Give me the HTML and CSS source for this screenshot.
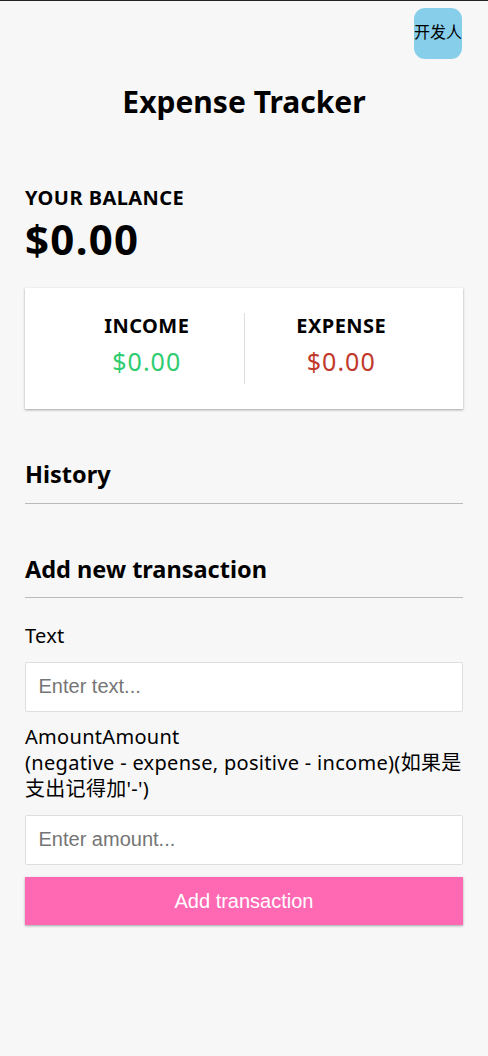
FILE: index.html
```html
<!DOCTYPE html>
<html lang="en">
<head>
<meta charset="UTF-8">
<title>Expense Tracker</title>
<link rel="stylesheet" href="styles.css">
</head>
<body>
<button class="dev">开发人</button>
<main class="container">
  <h2 class="title">Expense Tracker</h2>
  <h4 class="caption">Your Balance</h4>
  <h1 class="balance">$0.00</h1>
  <div class="inc-exp">
    <div class="col col-first">
      <h4 class="caption">Income</h4>
      <p class="money plus">$0.00</p>
    </div>
    <div class="col">
      <h4 class="caption">Expense</h4>
      <p class="money minus">$0.00</p>
    </div>
  </div>
  <h3 class="section">History</h3>
  <ul class="list"></ul>
  <h3 class="section section-add">Add new transaction</h3>
  <form class="form">
    <div class="form-control">
      <label class="label" for="text">Text</label>
      <input class="field" type="text" id="text" placeholder="Enter text...">
    </div>
    <div class="form-control">
      <label class="label" for="amount">AmountAmount<br>(negative - expense, positive - income)(如果是<br>支出记得加'-')</label>
      <input class="field" type="number" id="amount" placeholder="Enter amount...">
    </div>
    <button class="btn" type="button">Add transaction</button>
  </form>
</main>
</body>
</html>
```
FILE: styles.css
```css
* { box-sizing: border-box; }
html, body { margin: 0; padding: 0; }
body {
  background: #f7f7f7;
  border-top: 1px solid #222;
  font-family: "Noto Sans", "Noto Sans CJK SC", sans-serif;
  color: #000;
  min-height: 1056px;
}
.dev {
  position: absolute;
  top: 8px;
  right: 26px;
  width: 48px;
  height: 51px;
  padding: 0 0 5px;
  border: 0;
  border-radius: 11px;
  background: #87ceeb;
  color: #000;
  font-family: "Noto Sans CJK SC", sans-serif;
  font-size: 16px;
  line-height: 1;
}
.container {
  width: 438px;
  margin: 81px auto 0;
}
.title {
  margin: 0;
  text-align: center;
  font-size: 30px;
  line-height: 40px;
  font-weight: 700;
}
.caption {
  margin: 0;
  text-transform: uppercase;
  font-size: 20px;
  line-height: 26px;
  letter-spacing: 0.45px;
  font-weight: 700;
}
.container > .caption { margin-top: 63px; }
.balance {
  margin: 1px 0 0;
  font-size: 42px;
  line-height: 53px;
  letter-spacing: 1.3px;
  font-weight: 700;
}
.inc-exp {
  margin-top: 23px;
  background: #fff;
  box-shadow: 0 1px 3px rgba(0,0,0,0.12), 0 1px 2px rgba(0,0,0,0.24);
  padding: 25px;
  display: flex;
}
.col { flex: 1; text-align: center; }
.col-first { border-right: 1px solid #dedede; }
.money {
  margin: 6px 0;
  font-size: 25px;
  line-height: 33px;
  letter-spacing: 1px;
}
.plus { color: #2ecc71; }
.minus { color: #c0392b; }
.section {
  margin: 50px 0 12.5px;
  padding-bottom: 12.5px;
  border-bottom: 1px solid #bbb;
  font-size: 23.5px;
  line-height: 31px;
  font-weight: 700;
}
.list { margin: 0; padding: 0; list-style: none; }
.form { margin: 0; }
.label {
  display: inline-block;
  margin: 12.5px 0;
  font-size: 20px;
  line-height: 26px;
  letter-spacing: 0.3px;
  white-space: nowrap;
  vertical-align: top;
}
.form-control { display: flow-root; }
.field {
  display: block;
  width: 100%;
  height: 50px;
  border: 1px solid #dedede;
  border-radius: 2px;
  padding: 0 12.5px;
  font-family: "Liberation Sans", Arial, sans-serif;
  font-size: 20px;
  background: #fff;
  outline: none;
}
.field::placeholder { color: #757575; }
.btn {
  display: block;
  width: 100%;
  height: 48px;
  margin: 12.5px 0 37.5px;
  border: 0;
  background: #ff69b4;
  color: #fff;
  font-family: "Liberation Sans", Arial, sans-serif;
  font-size: 20px;
  box-shadow: 0 1px 3px rgba(0,0,0,0.12), 0 1px 2px rgba(0,0,0,0.24);
}
```
